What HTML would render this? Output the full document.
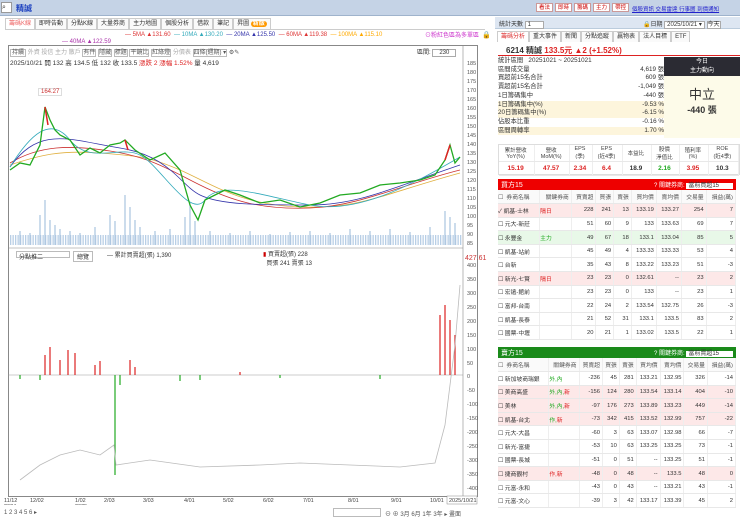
<!DOCTYPE html>
<html><head><meta charset="utf-8"><style>
*{box-sizing:border-box;margin:0;padding:0}
body{width:740px;height:519px;overflow:hidden;background:#fff;font-family:"Liberation Sans","Noto Sans CJK TC",sans-serif;font-size:6px;color:#333;position:relative}
.a{position:absolute}
.top{left:0;top:0;width:740px;height:16px;background:#c5d3e6;border-bottom:1px solid #9fb3cc}
.btn{display:inline-block;border:1px solid #c99;background:#fff;color:#c00;padding:0 2px;margin-right:2px;height:9px;line-height:8px;font-size:5.5px}
.tab{display:inline-block;border:1px solid #ccc;border-bottom:none;padding:0 3px;height:11px;line-height:10px;background:#fafafa}
table{border-collapse:collapse;width:100%}
td{border-right:1px solid #eee;border-bottom:1px solid #e8e8e8;height:13.6px;text-align:right;padding-right:2px;white-space:nowrap}
td:first-child{text-align:left}
.pk{background:#fde8e8}.gr{background:#e8f8e8}
</style></head><body>
<div class="a top">
 <div class="a" style="left:1px;top:2px;width:11px;height:11px;background:#fff;border:1px solid #999;font-size:7px;line-height:9px">⌕</div>
 <div class="a" style="left:16px;top:3px;color:#1a3fbf;font-size:8px;font-weight:bold">精誠</div>
 <div class="a" style="left:536px;top:3px;white-space:nowrap"><span class="btn">看法</span><span class="btn">即時</span><span class="btn">籌碼</span><span class="btn">主力</span><span class="btn">帶控</span></div>
 <div class="a" style="left:632px;top:5px;color:#22c;text-decoration:underline;white-space:nowrap;font-size:5.5px">個股資訊 交易雷達 行事曆 到價通知</div>
</div>
<div class="a" style="left:5px;top:18px;width:480px;height:12px;border-bottom:1px solid #ccc;white-space:nowrap">
 <span class="tab" style="color:#e66;background:#fff">籌碼K線</span><span class="tab">即時告動</span><span class="tab">分點K線</span><span class="tab">大量券商</span><span class="tab">主力地圖</span><span class="tab">個股分析</span><span class="tab">借款</span><span class="tab">筆記</span><span class="tab">昇圖 <b style="background:#f90;color:#fff;border-radius:4px;padding:0 2px">新版</b></span>
</div>
<div class="a" style="left:125px;top:32px;color:#d33;white-space:nowrap">— <span>5MA ▲131.60</span> <span style="color:#3ab">&nbsp;— 10MA ▲130.20</span> <span style="color:#33a">&nbsp;— 20MA ▲125.50</span> <span style="color:#d33">&nbsp;— 60MA ▲119.38</span> <span style="color:#fa0">&nbsp;— 100MA ▲115.10</span></div>
<div class="a" style="left:62px;top:39px;color:#a3a">— 40MA ▲122.59</div>
<div class="a" style="left:425px;top:30px;color:#c3c">⊙粉紅色區為多單區</div>
<div class="a" style="left:482px;top:31px;font-size:7px">🔒</div>
<div class="a" style="left:8px;top:45px;width:470px;height:452px;border:1px solid #888"></div>
<div class="a" style="left:10px;top:47px;color:#555;white-space:nowrap">
<span style="border:1px solid #bbb;padding:0 1px">持續</span> <span style="color:#aaa">外資 投信 主力 散戶</span> <span style="border:1px solid #bbb">有件</span> <span style="border:1px solid #bbb">隱藏</span> <span style="border:1px solid #bbb">標題</span> <span style="border:1px solid #bbb">平鏡比</span> <span style="border:1px solid #bbb">紅綠燈</span> <span style="color:#aaa">分價表</span> <span style="border:1px solid #bbb">四條(週期) ▾</span> ⚙✎</div>
<div class="a" style="left:417px;top:47px">區間: <span style="border:1px solid #aaa;padding:0 6px">230</span></div>
<div class="a" style="left:10px;top:57px;font-size:6.5px;white-space:nowrap">2025/10/21 開 132 高 134.5 低 132 收 133.5 <span style="color:#d22">漲跌 2 漲幅 1.52%</span> 量 4,619</div>
<div class="a" style="left:38px;top:88px;border:1px solid #ddd;color:#c33;padding:0 2px">164.27</div>
<svg class="a" style="left:0;top:45px" width="490" height="460">
<defs><pattern id="vp" width="2.5" height="40" patternUnits="userSpaceOnUse"><rect x="0" y="30" width="1.3" height="10" fill="#b8cfe6"/></pattern></defs>
<line x1="463" y1="0" x2="463" y2="452" stroke="#888" stroke-width="0.6"/>
<g font-size="5.5" fill="#555" font-family="Liberation Sans">
<text x="467" y="20">185</text><text x="467" y="29">180</text><text x="467" y="38">175</text><text x="467" y="47">170</text><text x="467" y="56">165</text><text x="467" y="65">160</text><text x="467" y="74">155</text><text x="467" y="83">150</text><text x="467" y="92">145</text><text x="467" y="101">140</text><text x="467" y="110">135</text><text x="467" y="119">130</text><text x="467" y="128">125</text><text x="467" y="137">120</text><text x="467" y="146">115</text><text x="467" y="155">110</text><text x="467" y="164">105</text><text x="467" y="173">100</text><text x="467" y="182">95</text><text x="467" y="191">90</text><text x="467" y="200">85</text>
<text x="465" y="215" fill="#c33" font-size="7">427.61</text><text x="467" y="222">400</text><text x="467" y="236">350</text><text x="467" y="250">300</text><text x="467" y="264">250</text><text x="467" y="278">200</text><text x="467" y="292">150</text><text x="467" y="306">100</text><text x="467" y="320">50</text><text x="467" y="333">0</text><text x="467" y="347">-50</text><text x="467" y="361">-100</text><text x="467" y="375">-150</text><text x="467" y="389">-200</text><text x="467" y="403">-250</text><text x="467" y="417">-300</text><text x="467" y="431">-350</text><text x="467" y="445">-400</text>
</g>
<rect x="10" y="160" width="452" height="40" fill="url(#vp)"/>
<g stroke="#a9c4e0" stroke-width="1.2">
<path d="M20 200v-14M30 200v-12M40 200v-30M45 200v-45M50 200v-25M55 200v-20M60 200v-16M70 200v-14M80 200v-12M95 200v-18M110 200v-30M115 200v-24M125 200v-50M130 200v-38M135 200v-25M140 200v-18M155 200v-14M170 200v-16M185 200v-28M190 200v-42M195 200v-24M210 200v-14M230 200v-12M250 200v-14M270 200v-11M290 200v-13M310 200v-14M330 200v-12M350 200v-16M370 200v-14M390 200v-16M410 200v-13M430 200v-18M445 200v-34M450 200v-28M455 200v-22"/>
</g>
<path d="M10 120 C40 110 60 105 100 108 S150 112 180 125 S240 160 300 162 S380 150 460 128" fill="none" stroke="#e0b040" stroke-width="0.8"/>
<path d="M10 118 C40 100 70 100 110 106 S170 125 200 140 S260 165 310 163 S400 140 460 125" fill="none" stroke="#c33" stroke-width="0.8"/>
<path d="M10 122 C40 80 70 95 120 103 S180 140 200 150 S260 160 310 160 S400 140 460 120" fill="none" stroke="#33a" stroke-width="0.8"/>
<path d="M10 122 C30 90 50 70 70 95 S120 100 140 110 S190 175 205 155 S260 150 310 160 S420 135 460 112" fill="none" stroke="#3ab" stroke-width="0.8"/>
<path d="M10 125 L20 118 L30 120 L40 100 L45 62 L50 75 L55 85 L60 90 L70 95 L80 110 L90 103 L100 108 L110 100 L120 98 L125 95 L135 105 L150 115 L165 108 L180 125 L190 160 L198 175 L205 155 L215 150 L225 145 L240 150 L260 158 L280 155 L300 162 L320 158 L340 150 L360 148 L380 140 L400 138 L420 135 L435 130 L445 115 L450 100 L455 118 L460 112" fill="none" stroke="#2a2" stroke-width="1.3"/>
<path d="M45 62 L48 80 M125 95 L128 105 M445 115 L450 100" stroke="#d22" stroke-width="1.5"/>
<line x1="8" y1="203" x2="463" y2="203" stroke="#888" stroke-width="0.6"/>
<line x1="8" y1="330" x2="463" y2="330" stroke="#999" stroke-width="0.5"/>
<g stroke="#d22" stroke-width="1.2">
<path d="M45 330v-20M50 330v-28M60 330v-15M68 330v-25M75 330v-22M95 330v-10M100 330v-14M130 330v-15M135 330v-8M240 330v-3M440 330v-60M445 330v-70M450 330v-55M455 330v-40"/>
</g>
<g stroke="#2a2" stroke-width="1.2"><path d="M20 330v4M40 330v5M115 330v100M120 330v10M180 330v6M200 330v5M280 330v3M380 330v4"/></g>
<path d="M20 435 L40 420 L60 410 L80 405 L100 410 L114 400 L116 420 L150 415 L200 422 L260 420 L300 418 L350 420 L400 422 L435 418 L445 380 L455 300 L460 240" fill="none" stroke="#bbb" stroke-width="0.8"/>
<g font-size="5.5" fill="#444"><text x="4" y="457">11/12</text><text x="4" y="463">2024</text><text x="30" y="457">12/02</text><text x="75" y="457">1/02</text><text x="75" y="463">2025</text><text x="104" y="457">2/03</text><text x="143" y="457">3/03</text><text x="184" y="457">4/01</text><text x="223" y="457">5/02</text><text x="263" y="457">6/02</text><text x="303" y="457">7/01</text><text x="348" y="457">8/01</text><text x="391" y="457">9/01</text><text x="430" y="457">10/01</text><rect x="447" y="451" width="30" height="8" fill="#fff" stroke="#888" stroke-width=".5"/><text x="449" y="457">2025/10/21</text></g>
</svg>
<div class="a" style="left:16px;top:251px;border:1px solid #bbb;width:54px;height:7px;padding-left:2px">分點推二</div>
<div class="a" style="left:73px;top:251px;border:1px solid #bbb;padding:0 3px">總覽</div>
<div class="a" style="left:107px;top:250px">— 累計買賣超(張) 1,390</div>
<div class="a" style="left:263px;top:249px;color:#333"><span style="color:#c00">▮</span> 買賣超(張) 228<br>&nbsp;&nbsp;買張 241 賣張 13</div>
<div class="a" style="left:4px;top:509px;color:#555">1 2 3 4 5 6 ▸</div>
<div class="a" style="left:333px;top:508px;width:48px;height:9px;border:1px solid #bbb"></div>
<div class="a" style="left:385px;top:509px;color:#555;white-space:nowrap">⊖ ⊕ 3月 6月 1年 3年 ▸ 畫面</div>
<div class="a" style="left:495px;top:17px;width:245px;height:12px;background:#dde6f2;border-bottom:1px solid #bcd">
 <span class="a" style="left:4px;top:2px">統計天數 <span style="background:#fff;border:1px solid #aaa;padding:0 12px 0 2px">1</span></span>
 <span class="a" style="left:148px;top:2px;white-space:nowrap">🔒日期 <span style="background:#fff;border:1px solid #aaa;padding:0 2px">2025/10/21 ▾</span> <span style="background:#fff;border:1px solid #aaa">今天</span></span>
</div>
<div class="a" style="left:497px;top:31px;white-space:nowrap"><span class="tab" style="color:#d33;background:#fff">籌碼分析</span><span class="tab">重大事件</span><span class="tab">新聞</span><span class="tab">分點追蹤</span><span class="tab">贏物表</span><span class="tab">法人目標</span><span class="tab">ETF</span></div>
<div class="a" style="left:498px;top:43px;width:242px;height:13px;border-bottom:1.5px solid #d22;font-size:8px;padding:2px 0 0 8px;white-space:nowrap"><b>6214 精誠</b> <b style="color:#d22">133.5元 ▲2 (+1.52%)</b></div>
<div class="a" style="left:498px;top:57px;width:166px;font-size:6.3px;line-height:8.7px">
<div>統計區間 &nbsp; 20251021 ~ 20251021</div>
<div>區間成交量<span style="float:right">4,619 張</span></div>
<div>買超前15名合計<span style="float:right">609 張</span></div>
<div>賣超前15名合計<span style="float:right">-1,049 張</span></div>
<div>1日籌碼集中<span style="float:right">-440 張</span></div>
<div style="background:#fdf5dc">1日籌碼集中(%)<span style="float:right">-9.53 %</span></div>
<div style="background:#fdf5dc">20日籌碼集中(%)<span style="float:right">-6.15 %</span></div>
<div>佔股本比重<span style="float:right">-0.16 %</span></div>
<div style="background:#fdf5dc">區間周轉率<span style="float:right">1.70 %</span></div>
</div>
<div class="a" style="left:664px;top:57px;width:76px;height:81px;background:#fdfbe9">
 <div style="background:#2b2b33;color:#fff;height:19px;text-align:center;line-height:9px;padding-top:1px">今日<br>主力動向</div>
 <div style="text-align:center;font-size:13px;margin-top:8px">中立</div>
 <div style="text-align:center;font-size:9px;font-weight:bold">-440 張</div>
</div>
<div class="a" style="left:498px;top:144px;width:242px;height:31px;border:1px solid #ddd">
<table style="font-size:5.5px;text-align:center"><tr style="height:16px;color:#444"><td style="text-align:center">累計營收<br>YoY(%)</td><td style="text-align:center">營收<br>MoM(%)</td><td style="text-align:center">EPS<br>(季)</td><td style="text-align:center">EPS<br>(近4季)</td><td style="text-align:center">本益比</td><td style="text-align:center">股價<br>淨值比</td><td style="text-align:center">殖利率<br>(%)</td><td style="text-align:center">ROE<br>(近4季)</td></tr>
<tr style="font-weight:bold;font-size:6.5px"><td style="text-align:center;color:#d22">15.19</td><td style="text-align:center;color:#d22">47.57</td><td style="text-align:center;color:#d22">2.34</td><td style="text-align:center;color:#d22">6.4</td><td style="text-align:center">18.9</td><td style="text-align:center;color:#2a2">2.16</td><td style="text-align:center;color:#d22">3.95</td><td style="text-align:center">10.3</td></tr></table></div>
<div class="a" style="left:498px;top:179px;width:238px;height:11px;background:#e00;color:#fff;font-size:7px;padding:1px 3px">買方15<span style="float:right;font-size:6px">? 關鍵券商: <span style="background:#fff;color:#333;padding:0 14px 0 2px">當前買超15</span></span></div>
<div class="a" style="left:498px;top:190px;width:238px;font-size:5.8px">
<table>
<tr style="color:#555;background:#fafafa"><td>☐ &nbsp;券商名稱</td><td>關鍵券商</td><td>買賣超</td><td>買張</td><td>賣張</td><td>買均價</td><td>賣均價</td><td>交易量</td><td>損益(萬)</td></tr>
<tr class="pk"><td>✓ 凱基-士林</td><td style="color:#d22;text-align:left">隔日</td><td>228</td><td>241</td><td>13</td><td>133.19</td><td>133.27</td><td>254</td><td>7</td></tr>
<tr><td>☐ 元大-新莊</td><td></td><td>51</td><td>60</td><td>9</td><td>133</td><td>133.63</td><td>69</td><td>7</td></tr>
<tr class="gr"><td>☐ 永豐金</td><td style="color:#2a2;text-align:left">主力</td><td>49</td><td>67</td><td>18</td><td>133.1</td><td>133.04</td><td>85</td><td>5</td></tr>
<tr><td>☐ 凱基-站前</td><td></td><td>45</td><td>49</td><td>4</td><td>133.33</td><td>133.33</td><td>53</td><td>4</td></tr>
<tr><td>☐ 台新</td><td></td><td>35</td><td>43</td><td>8</td><td>133.22</td><td>133.23</td><td>51</td><td>-3</td></tr>
<tr class="pk"><td>☐ 新光-七賢</td><td style="color:#d22;text-align:left">隔日</td><td>23</td><td>23</td><td>0</td><td>132.61</td><td>--</td><td>23</td><td>2</td></tr>
<tr><td>☐ 宏遠-館前</td><td></td><td>23</td><td>23</td><td>0</td><td>133</td><td>--</td><td>23</td><td>1</td></tr>
<tr><td>☐ 富邦-台南</td><td></td><td>22</td><td>24</td><td>2</td><td>133.54</td><td>132.75</td><td>26</td><td>-3</td></tr>
<tr><td>☐ 凱基-長泰</td><td></td><td>21</td><td>52</td><td>31</td><td>133.1</td><td>133.5</td><td>83</td><td>2</td></tr>
<tr><td>☐ 國票-中壢</td><td></td><td>20</td><td>21</td><td>1</td><td>133.02</td><td>133.5</td><td>22</td><td>1</td></tr>
</table></div>
<div class="a" style="left:498px;top:347px;width:238px;height:11px;background:#1a8a1a;color:#fff;font-size:7px;padding:1px 3px">賣方15<span style="float:right;font-size:6px">? 關鍵券商: <span style="background:#fff;color:#333;padding:0 14px 0 2px">當前賣超15</span></span></div>
<div class="a" style="left:498px;top:358px;width:238px;font-size:5.8px">
<table>
<tr style="color:#555;background:#fafafa"><td>☐ &nbsp;券商名稱</td><td>關鍵券商</td><td>買賣超</td><td>買張</td><td>賣張</td><td>買均價</td><td>賣均價</td><td>交易量</td><td>損益(萬)</td></tr>
<tr><td>☐ 新加坡商瑞銀</td><td style="color:#2a2;text-align:left">外,內</td><td>-236</td><td>45</td><td>281</td><td>133.21</td><td>132.95</td><td>326</td><td>-14</td></tr>
<tr class="pk"><td>☐ 美商高盛</td><td style="color:#2a2;text-align:left">外,內,<span style="color:#d22">新</span></td><td>-156</td><td>124</td><td>280</td><td>133.54</td><td>133.14</td><td>404</td><td>-10</td></tr>
<tr class="pk"><td>☐ 美林</td><td style="color:#2a2;text-align:left">外,內,<span style="color:#d22">新</span></td><td>-97</td><td>176</td><td>273</td><td>133.89</td><td>133.23</td><td>449</td><td>-14</td></tr>
<tr class="pk"><td>☐ 凱基-台北</td><td style="color:#2a2;text-align:left">作,<span style="color:#d22">新</span></td><td>-73</td><td>342</td><td>415</td><td>133.52</td><td>132.99</td><td>757</td><td>-22</td></tr>
<tr><td>☐ 元大-大昌</td><td></td><td>-60</td><td>3</td><td>63</td><td>133.07</td><td>132.98</td><td>66</td><td>-7</td></tr>
<tr><td>☐ 新光-富捷</td><td></td><td>-53</td><td>10</td><td>63</td><td>133.25</td><td>133.25</td><td>73</td><td>-1</td></tr>
<tr><td>☐ 國票-長城</td><td></td><td>-51</td><td>0</td><td>51</td><td>--</td><td>133.25</td><td>51</td><td>-1</td></tr>
<tr class="pk"><td>☐ 捷商觀村</td><td style="color:#d22;text-align:left">作,新</td><td>-48</td><td>0</td><td>48</td><td>--</td><td>133.5</td><td>48</td><td>0</td></tr>
<tr><td>☐ 元富-永和</td><td></td><td>-43</td><td>0</td><td>43</td><td>--</td><td>133.21</td><td>43</td><td>-1</td></tr>
<tr><td>☐ 元富-文心</td><td></td><td>-39</td><td>3</td><td>42</td><td>133.17</td><td>133.39</td><td>45</td><td>2</td></tr>
</table></div>
</body></html>
